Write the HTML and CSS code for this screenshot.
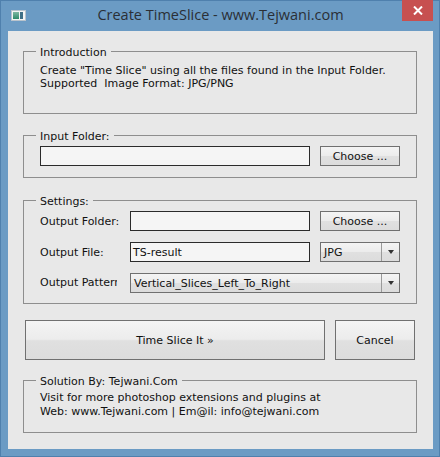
FILE: index.html
```html
<!DOCTYPE html>
<html>
<head>
<meta charset="utf-8">
<link rel="stylesheet" href="styles.css">
</head>
<body>
<div class="window">
  <div class="titlebar">
    <svg class="app-icon" width="15" height="11" viewBox="0 0 15 11">
      <rect x="0.5" y="0.5" width="14" height="10" fill="#f4f4f4" stroke="#b9c3cc"/>
      <rect x="2" y="2" width="6" height="7" fill="url(#g)"/>
      <rect x="9" y="2" width="3" height="7" fill="#3f6f86"/>
      <defs>
        <linearGradient id="g" x1="0" y1="0" x2="0" y2="1">
          <stop offset="0" stop-color="#7fb7a2"/>
          <stop offset="1" stop-color="#2e8a6a"/>
        </linearGradient>
      </defs>
    </svg>
    <div class="title">Create TimeSlice - www.Tejwani.com</div>
    <div class="close">
      <svg width="10" height="9" viewBox="0 0 10 9"><path d="M1 0.5 L9 8.5 M9 0.5 L1 8.5" stroke="#fff" stroke-width="2"/></svg>
    </div>
  </div>
  <div class="client">
    <div class="group intro">
      <div class="legend">Introduction</div>
      <p class="text">Create "Time Slice" using all the files found in the Input Folder.<br>Supported&nbsp; Image Format: JPG/PNG</p>
    </div>

    <div class="group input-group">
      <div class="legend">Input Folder:</div>
      <div class="row-input">
        <div class="textbox wide"></div>
        <div class="btn small">Choose ...</div>
      </div>
    </div>

    <div class="group settings">
      <div class="legend">Settings:</div>
      <div class="grid">
        <div class="lbl">Output Folder:</div>
        <div class="textbox"></div>
        <div class="btn small c4">Choose ...</div>

        <div class="lbl">Output File:</div>
        <div class="textbox"><span class="val">TS-result</span></div>
        <div class="combo c4"><span class="val">JPG</span><span class="drop"><i class="arrow"></i></span></div>

        <div class="lbl clip"><span>Output Pattern</span></div>
        <div class="combo span3"><span class="val">Vertical_Slices_Left_To_Right</span><span class="drop"><i class="arrow"></i></span></div>
      </div>
    </div>

    <div class="actions">
      <div class="btn big">Time Slice It »</div>
      <div class="btn cancel">Cancel</div>
    </div>

    <div class="group solution">
      <div class="legend">Solution By: Tejwani.Com</div>
      <p class="text">Visit for more photoshop extensions and plugins at<br>Web: www.Tejwani.com | Em@il: info@tejwani.com</p>
    </div>
  </div>
</div>
</body>
</html>
```

FILE: styles.css
```css
html, body {
  margin: 0;
  padding: 0;
}
body {
  width: 440px;
  height: 457px;
  overflow: hidden;
  font-family: "DejaVu Sans", sans-serif;
  font-size: 11px;
  color: #111;
}
.window {
  width: 440px;
  height: 457px;
  box-sizing: border-box;
  background: #6b9bc4;
  border: 1px solid #4f80ad;
  padding: 0 6px 7px 7px;
  display: flex;
  flex-direction: column;
}
.titlebar {
  height: 30px;
  display: grid;
  grid-template-columns: 1fr auto 1fr;
  align-items: start;
}
.app-icon {
  margin: 9px 0 0 3px;
  justify-self: start;
}
.title {
  font-family: "Open Sans", "Noto Sans", sans-serif;
  font-size: 14.5px;
  color: #2a2f36;
  line-height: 20px;
  margin-top: 4px;
}
.close {
  justify-self: end;
  margin-top: -1px;
  width: 31px;
  height: 21px;
  background: #c75050;
  display: flex;
  align-items: center;
  justify-content: center;
}
.client {
  flex: 1;
  background: #e8e8e8;
  padding: 20px 16px 0 15px;
}
.group {
  border: 1px solid #8e8e8e;
  box-sizing: border-box;
  padding: 0 15px 0 16px;
}
.legend {
  width: max-content;
  margin: -6px 0 0 -4px;
  padding: 0 4px 0 4px;
  background: #e8e8e8;
  line-height: 13px;
}
.text {
  margin: 5px 0 0;
  line-height: 13px;
}
.intro { height: 63px; }
.input-group { height: 43px; margin-top: 21px; }
.settings { height: 104px; margin-top: 22px; }
.solution { height: 53px; margin-top: 20px; }
.solution .text { margin-top: 3px; line-height: 14px; }

.row-input {
  display: flex;
  gap: 10px;
  margin-top: 3px;
}
.textbox {
  box-sizing: border-box;
  height: 20px;
  border: 1px solid #2b2b2b;
  background: #f5f5f5;
  display: flex;
  align-items: center;
  padding-left: 2px;
}
.textbox.wide { width: 270px; }
.btn {
  box-sizing: border-box;
  border: 1px solid #707070;
  background: linear-gradient(#f4f4f4 0%, #ececec 48%, #e0e0e0 52%, #dcdcdc 100%);
  display: flex;
  align-items: center;
  justify-content: center;
}
.btn.small { width: 80px; height: 20px; }
.grid {
  display: grid;
  grid-template-columns: 90px 180px 10px 80px;
  row-gap: 11px;
  margin-top: 3px;
}
.c4 { grid-column: 4; }
.lbl {
  display: flex;
  align-items: center;
  height: 20px;
  white-space: nowrap;
}
.lbl.clip {
  display: block;
  overflow: hidden;
  width: 77px;
  line-height: 20px;
}
.combo {
  box-sizing: border-box;
  height: 20px;
  border: 1px solid #707070;
  background: linear-gradient(#f4f4f4 0%, #ececec 48%, #e0e0e0 52%, #dcdcdc 100%);
  display: flex;
  align-items: center;
}
.combo .val {
  flex: 1;
  padding-left: 3px;
}
.combo .drop {
  width: 17px;
  height: 100%;
  border-left: 1px solid #9a9a9a;
  display: flex;
  align-items: center;
  justify-content: center;
}
.arrow {
  width: 0;
  height: 0;
  border-left: 3.5px solid transparent;
  border-right: 3.5px solid transparent;
  border-top: 4px solid #333;
}
.span3 { grid-column: 2 / 5; }

.actions {
  display: flex;
  gap: 10px;
  margin-top: 16px;
  padding-left: 2px;
}
.btn.big { width: 300px; height: 40px; }
.btn.cancel { width: 80px; height: 40px; }
```
